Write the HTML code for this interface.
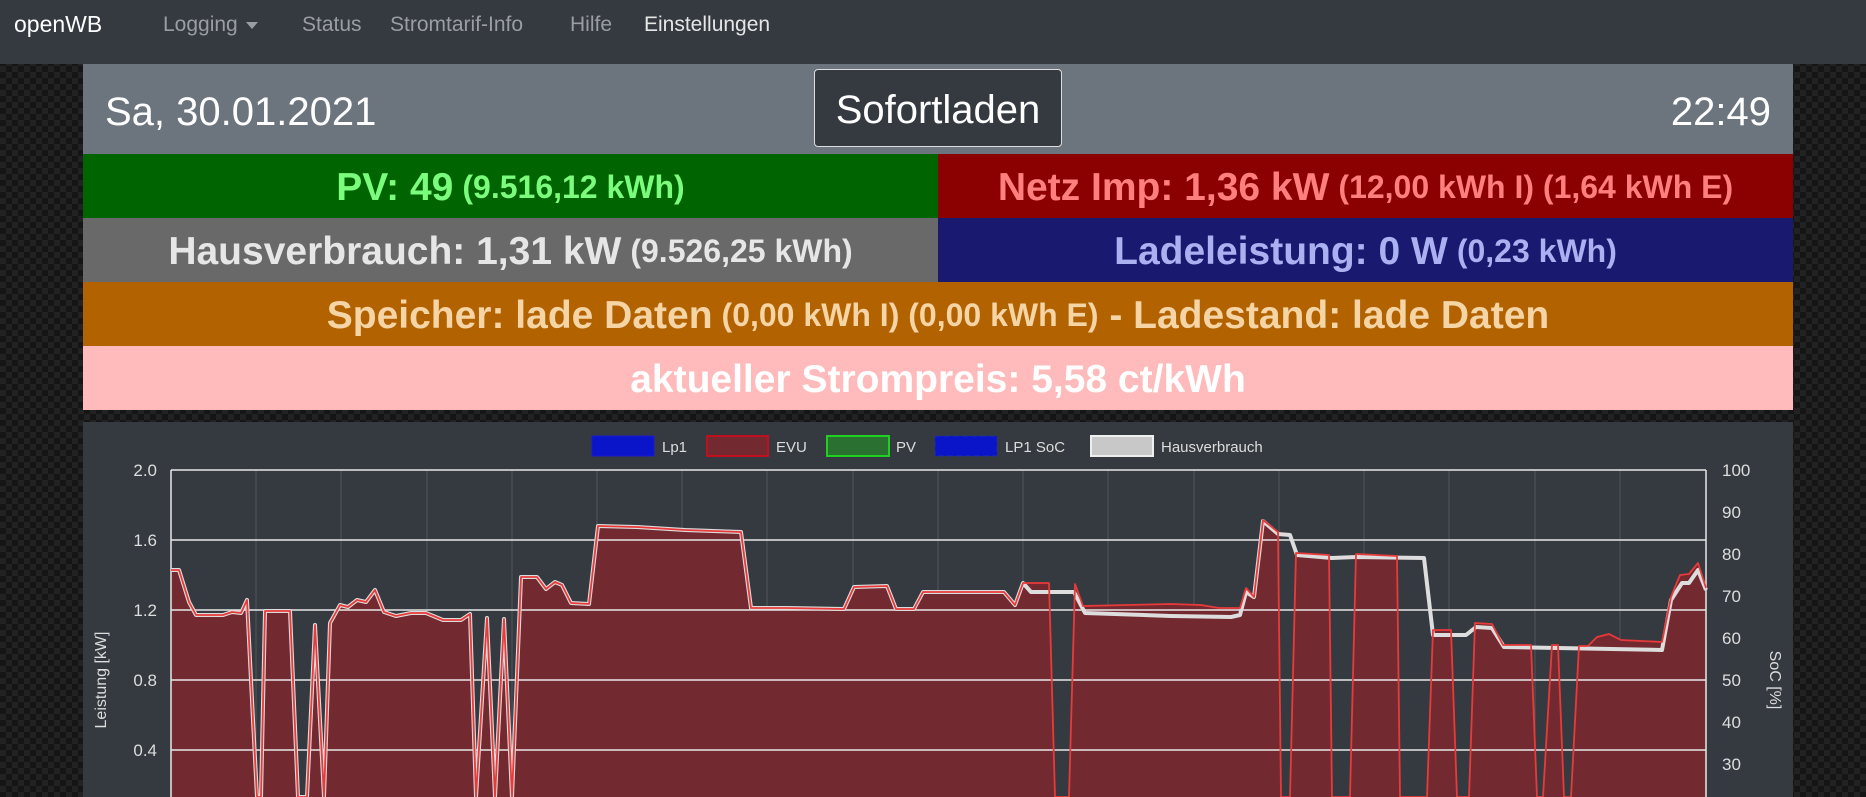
<!DOCTYPE html>
<html><head><meta charset="utf-8"><style>
*{margin:0;padding:0;box-sizing:border-box}
body{width:1866px;height:797px;overflow:hidden;font-family:"Liberation Sans",sans-serif;
background-color:#1a1a1a;
background-image:repeating-conic-gradient(#222 0 25%,#151515 0 50%);background-size:12px 12px;position:relative}
.nav{position:absolute;left:0;top:0;width:1866px;height:64px;background:#343a40}
.nav span{position:absolute;top:13px;font-size:21px;color:#9a9ea3}
.brand{font-size:23px!important;color:#fff!important;top:11px!important}
.car{display:inline-block;width:0;height:0;border-left:6px solid transparent;border-right:6px solid transparent;border-top:7px solid #9a9ea3;vertical-align:middle;margin-left:8px}
.hdr{position:absolute;left:83px;top:64px;width:1710px;height:90px;background:#6c757d;color:#fff}
.row{position:absolute;height:64px;display:flex;align-items:center;justify-content:center;font-weight:bold;font-size:39px;white-space:nowrap;padding-top:3px}
.row small{font-size:32px;margin-left:9px}
.chart{position:absolute;left:83px;top:422px;width:1710px;height:375px;background:#343a40}
</style></head><body>
<div class="nav">
<span class="brand" style="left:14px">openWB</span>
<span style="left:163px">Logging<i class="car"></i></span>
<span style="left:302px">Status</span>
<span style="left:390px">Stromtarif-Info</span>
<span style="left:570px">Hilfe</span>
<span style="left:644px;color:#e6e6e6">Einstellungen</span>
</div>
<div class="hdr">
<div style="position:absolute;left:22px;top:26px;font-size:40px">Sa, 30.01.2021</div>
<div style="position:absolute;left:731px;top:5px;width:248px;height:78px;background:#343a40;border:1px solid #ddd;border-radius:4px;font-size:40px;display:flex;align-items:center;justify-content:center;padding-top:5px">Sofortladen</div>
<div style="position:absolute;right:22px;top:26px;font-size:40px">22:49</div>
</div>
<div class="row" style="left:83px;top:154px;width:855px;background:#006400;color:#7cfc7c">PV: 49<small>(9.516,12 kWh)</small></div>
<div class="row" style="left:938px;top:154px;width:855px;background:#8b0000;color:#ff7f7f">Netz Imp: 1,36 kW<small>(12,00 kWh I) (1,64 kWh E)</small></div>
<div class="row" style="left:83px;top:218px;width:855px;background:#696969;color:#e6e6e6">Hausverbrauch: 1,31 kW<small>(9.526,25 kWh)</small></div>
<div class="row" style="left:938px;top:218px;width:855px;background:#191970;color:#aab0f0">Ladeleistung: 0 W<small>(0,23 kWh)</small></div>
<div class="row" style="left:83px;top:282px;width:1710px;background:#b36200;color:#f5d4a6">Speicher: lade Daten<small>(0,00 kWh I) (0,00 kWh E)</small>&nbsp;- Ladestand: lade Daten</div>
<div class="row" style="left:83px;top:346px;width:1710px;background:#ffbbbb;color:#fff">aktueller Strompreis: 5,58 ct/kWh</div>
<div class="chart"></div>
<svg style="position:absolute;left:0;top:0" width="1866" height="797" font-family="Liberation Sans, sans-serif">
<g fill="#ddd" font-size="15">
<rect x="592" y="436" width="62" height="20" fill="#0a14c8" stroke="#1a1ad0"/><text x="662" y="452">Lp1</text>
<rect x="707" y="436" width="61" height="20" fill="#722a30" stroke="#c01020" stroke-width="2"/><text x="776" y="452">EVU</text>
<rect x="827" y="436" width="62" height="20" fill="#2a7030" stroke="#20d020" stroke-width="2"/><text x="896" y="452">PV</text>
<rect x="935" y="436" width="62" height="20" fill="#0a14c8" stroke="#2030a0" stroke-dasharray="6 3"/><text x="1005" y="452">LP1 SoC</text>
<rect x="1091" y="436" width="62" height="20" fill="#c8c8c8" stroke="#eee" stroke-width="2"/><text x="1161" y="452">Hausverbrauch</text>
</g>
<g stroke="rgba(255,255,255,0.15)" stroke-width="1">
<path d="M256 470V797M341 470V797M427 470V797M512 470V797M597 470V797M682 470V797M767 470V797M853 470V797M938 470V797M1023 470V797M1108 470V797M1194 470V797M1279 470V797M1364 470V797M1449 470V797M1535 470V797M1620 470V797"/>
</g>
<path fill="#722a30" d="M171 797L171 570L179 570L189 602L196 615L223 615L232 612L241 613L247 600L253 720L257 797L261 797L265 611L290 611L298 797L307 797L315 625L324 797L330 623L340 605L348 607L357 600L366 602L375 590L384 612L396 616L411 613L426 613L443 620L461 620L470 614L476 797L487 618L495 797L504 619L512 797L521 577L537 577L546 589L555 582L562 585L571 603L589 604L598 526L637 527L685 530L741 532L751 608L786 608L844 609L854 587L887 586L896 609L914 609L923 592L1004 592L1015 605L1023 583L1049 583L1055 797L1069 797L1075 584L1083 606L1171 604L1201 605L1219 608L1240 608L1246 588L1254 597L1263 520L1278 532L1281 797L1290 797L1296 553L1329 555L1332 797L1350 797L1356 554L1397 556L1400 797L1427 797L1433 630L1451 630L1457 797L1469 797L1475 623L1492 624L1503 645L1531 645L1537 797L1543 797L1552 645L1558 645L1564 797L1571 797L1579 646L1588 646L1597 637L1609 634L1621 640L1662 642L1671 597L1680 575L1689 574L1698 563L1706 588L1706 797Z"/>
<g stroke="#e8e8e8" stroke-width="1.5" fill="none">
<path d="M171 470H1706M171 540H1706M171 610H1706M171 680H1706M171 750H1706"/>
<path d="M171 470V797"/>
<path d="M1706 470V797"/>
</g>
<path fill="none" stroke="#ddd" stroke-width="4" stroke-linejoin="round" d="M171 570L179 570L189 602L196 615L223 615L232 612L241 613L247 600L253 720L257 797L261 797L265 611L290 611L298 797L307 797L315 625L324 797L330 623L340 605L348 607L357 600L366 602L375 590L384 612L396 616L411 613L426 613L443 620L461 620L470 614L476 797L487 618L495 797L504 619L512 797L521 577L537 577L546 589L555 582L562 585L571 603L589 604L598 526L637 527L685 530L741 532L751 608L786 608L844 609L854 587L887 586L896 609L914 609L923 592L1004 592L1015 605L1023 583L1031 592L1074 592L1085 613L1171 616L1231 617L1240 615L1246 592L1254 597L1263 521L1278 534L1290 535L1297 555L1332 558L1356 557L1424 558L1433 635L1466 635L1476 627L1492 628L1504 647L1662 650L1671 600L1682 583L1689 583L1698 570L1706 590"/>
<path fill="none" stroke="#e83a3a" stroke-width="1.8" stroke-linejoin="round" d="M171 570L179 570L189 602L196 615L223 615L232 612L241 613L247 600L253 720L257 797L261 797L265 611L290 611L298 797L307 797L315 625L324 797L330 623L340 605L348 607L357 600L366 602L375 590L384 612L396 616L411 613L426 613L443 620L461 620L470 614L476 797L487 618L495 797L504 619L512 797L521 577L537 577L546 589L555 582L562 585L571 603L589 604L598 526L637 527L685 530L741 532L751 608L786 608L844 609L854 587L887 586L896 609L914 609L923 592L1004 592L1015 605L1023 583L1049 583L1055 797L1069 797L1075 584L1083 606L1171 604L1201 605L1219 608L1240 608L1246 588L1254 597L1263 520L1278 532L1281 797L1290 797L1296 553L1329 555L1332 797L1350 797L1356 554L1397 556L1400 797L1427 797L1433 630L1451 630L1457 797L1469 797L1475 623L1492 624L1503 645L1531 645L1537 797L1543 797L1552 645L1558 645L1564 797L1571 797L1579 646L1588 646L1597 637L1609 634L1621 640L1662 642L1671 597L1680 575L1689 574L1698 563L1706 588"/>
<g fill="#ddd" font-size="17" text-anchor="end">
<text x="157" y="476">2.0</text><text x="157" y="546">1.6</text><text x="157" y="616">1.2</text><text x="157" y="686">0.8</text><text x="157" y="756">0.4</text>
</g>
<g fill="#ddd" font-size="17">
<text x="1722" y="476">100</text><text x="1722" y="518">90</text><text x="1722" y="560">80</text><text x="1722" y="602">70</text><text x="1722" y="644">60</text><text x="1722" y="686">50</text><text x="1722" y="728">40</text><text x="1722" y="770">30</text>
</g>
<text transform="translate(106,680) rotate(-90)" fill="#ddd" font-size="16" text-anchor="middle">Leistung [kW]</text>
<text transform="translate(1770,680) rotate(90)" fill="#ddd" font-size="16" text-anchor="middle">SoC [%]</text>
</svg>
</body></html>
